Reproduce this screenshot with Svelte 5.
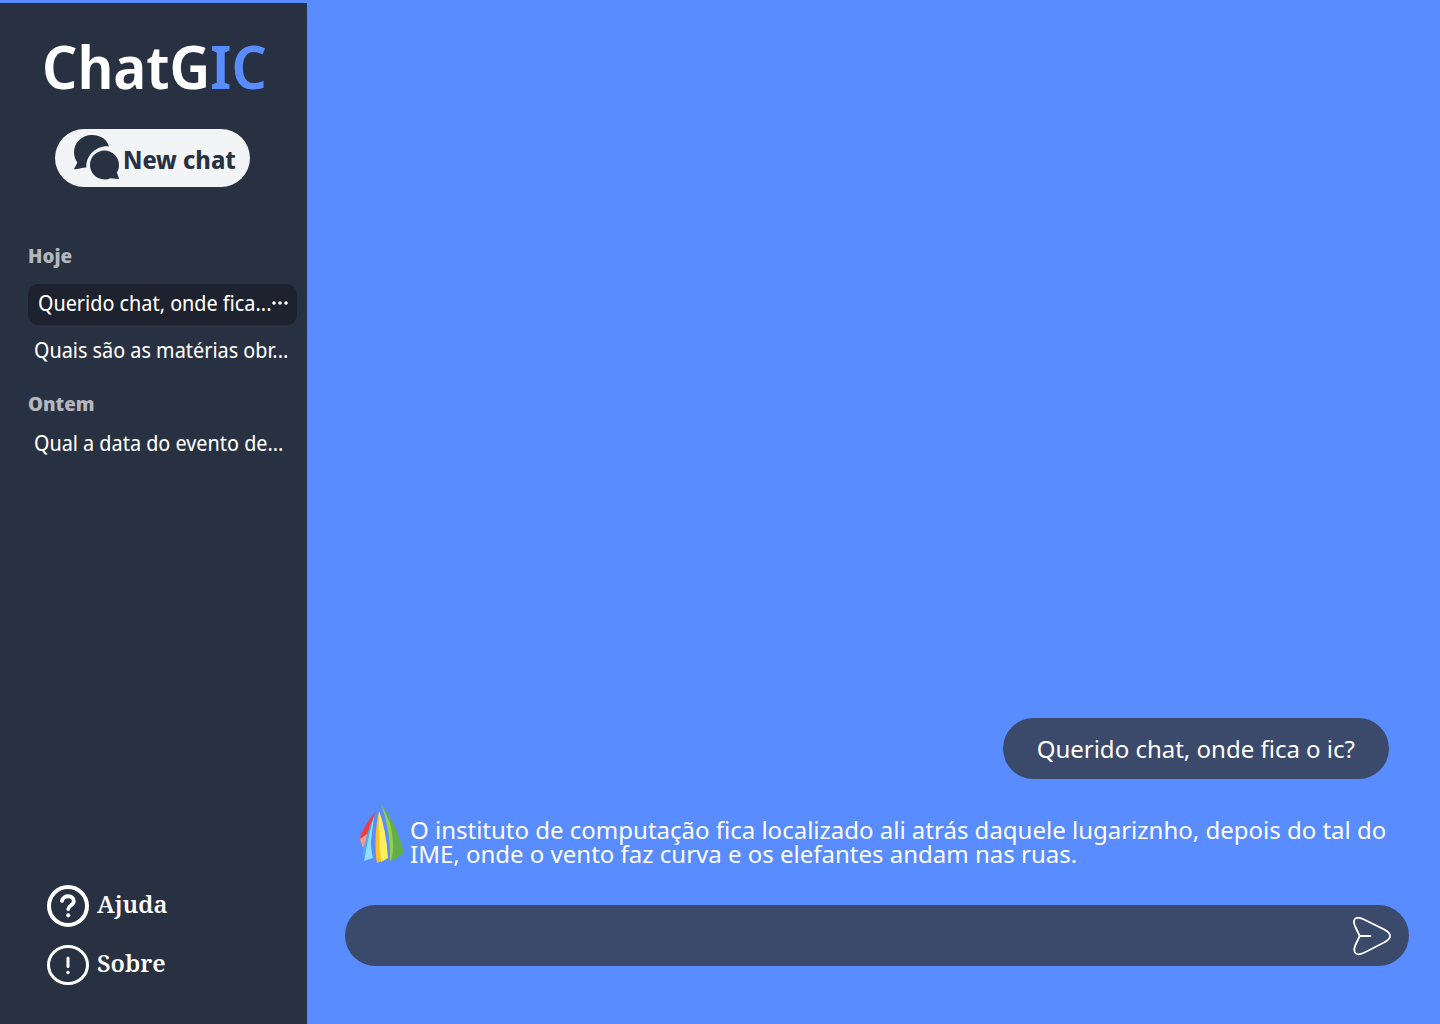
<script>
  const groups = [
    {
      label: 'Hoje',
      chats: [
        { title: 'Querido chat, onde fica...', active: true },
        { title: 'Quais são as matérias obr...', active: false }
      ]
    },
    { label: 'Ontem', chats: [{ title: 'Qual a data do evento de...', active: false }] }
  ];
  let message = $state('');
</script>

<div class="app">
  <aside class="sidebar">
    <h1 class="logo">ChatG<span>IC</span></h1>

    <button class="new-chat" type="button">
      <svg width="46" height="45" viewBox="0 0 46 45" aria-hidden="true">
        <path d="M18 0C27 0 33.500 5 35 11.500C24 10 12 19 12.300 32.500C9.500 32.500 7 33.500 .8 34.200C.2 34.200 0 33.800 .4 33.200L3.400 27.500C1.200 24.500 0 21 0 17.500C0 7.500 8 0 18 0Z" />
        <path d="M30.500 15.600C38.500 15.600 45 22 45 30.200C45 33 44.200 35.500 42.800 37.600L44.800 42.800C45 43.600 44.800 44 44 44L36.500 43.200C34.600 44 32.700 44.400 30.500 44.400C22.500 44.400 16 38 16 30C16 22 22.500 15.600 30.500 15.600Z" />
      </svg>
      <span>New chat</span>
    </button>

    <nav class="history" aria-label="Conversas">
      {#each groups as group}
        <section class="group">
          <h2>{group.label}</h2>
          <ul>
            {#each group.chats as chat}
              <li class:active={chat.active}>
                <a href="#chat">{chat.title}</a>
                {#if chat.active}
                  <button class="more" type="button" aria-label="Mais opções">
                    <svg width="16" height="4" viewBox="0 0 16 4" aria-hidden="true">
                      <circle cx="2" cy="2" r="1.800" /><circle cx="8" cy="2" r="1.800" /><circle cx="14" cy="2" r="1.800" />
                    </svg>
                  </button>
                {/if}
              </li>
            {/each}
          </ul>
        </section>
      {/each}
    </nav>

    <footer class="links">
      <a href="#ajuda">
        <svg width="42" height="42" viewBox="0 0 42 42" fill="none" stroke="#fff" stroke-linecap="round" stroke-linejoin="round" aria-hidden="true">
          <circle cx="21" cy="21" r="19" stroke-width="4" />
          <path d="M15 15.800C16.200 9.500 26.800 9.800 26.800 16.200C26.800 20.300 21.200 20.500 21.200 24" stroke-width="3.800" />
          <circle cx="21.200" cy="30.300" r="2.100" fill="#fff" stroke="none" />
        </svg>
        <span>Ajuda</span>
      </a>
      <a href="#sobre">
        <svg width="42" height="42" viewBox="0 0 42 42" fill="none" stroke="#fff" stroke-linecap="round" aria-hidden="true">
          <ellipse cx="21" cy="21" rx="19.500" ry="18.500" stroke-width="3" />
          <path d="M21 14V22.500" stroke-width="3" />
          <circle cx="21" cy="28.500" r="1.700" fill="#fff" stroke="none" />
        </svg>
        <span>Sobre</span>
      </a>
    </footer>
  </aside>

  <main class="chat">
    <p class="question">Querido chat, onde fica o ic?</p>

    <div class="answer">
      <svg width="46" height="60" viewBox="0 0 46 60" aria-hidden="true">
        <path d="M16 6C9 14 3 24 0 32L1 36L7 29Z" fill="#f43b3b" />
        <path d="M7 29L0 34L3 43L6 37Z" fill="#ff9c8c" />
        <path d="M14 11Q6 30 2 51L6 49Z" fill="#4fa8f0" />
        <path d="M14 11Q9 28 4 56L13 53Q11 46 11 36Z" fill="#8fdcff" />
        <path d="M19 6Q14 28 16 52L17 58L23 55Z" fill="#fbc22f" />
        <path d="M19 6Q18 28 21 57L28 53Q26 24 19 6Z" fill="#ffef58" />
        <path d="M21 -2Q31 28 30 56L36 52L33 25Z" fill="#95cf4d" />
        <path d="M21 -2Q38 21 44 48Q38 53 31 56Q36 41 29 14Z" fill="#62ae48" />
      </svg>
      <p>O instituto de computação fica localizado ali atrás daquele lugariznho, depois do tal do IME, onde o vento faz curva e os elefantes andam nas ruas.</p>
    </div>

    <form class="composer" onsubmit={(e) => e.preventDefault()}>
      <input type="text" aria-label="Mensagem" bind:value={message} />
      <button type="submit" aria-label="Enviar">
        <svg width="40" height="40" viewBox="0 0 40 40" fill="none" stroke="#fff" stroke-width="1.800" stroke-linecap="round" stroke-linejoin="round" aria-hidden="true">
          <path d="M8.700 20L4.400 11C1.500 4.500 3.300 1.300 8 1.800C9.500 2 11 2.500 13 3.500L33 13.400C41 17.500 41 22.500 33 26.500L13 36.800C8.500 39 5 39 3.700 36C3 34 3 32 4.400 29ZM8.700 20H19.500" />
        </svg>
      </button>
    </form>
  </main>
</div>

<style>
  :global(body) {
    margin: 0;
    background: #588cff;
  }
  .app {
    display: flex;
    min-height: 100vh;
    box-sizing: border-box;
    border-top: 3px solid #588cff;
    font-family: 'Noto Sans', sans-serif;
    color: #fff;
  }
  h1, h2, p, ul {
    margin: 0;
    padding: 0;
  }
  a {
    color: inherit;
    text-decoration: none;
  }
  button {
    border: 0;
    padding: 0;
    background: none;
    color: inherit;
    font: inherit;
    cursor: pointer;
  }
  svg {
    display: block;
    flex: none;
    overflow: visible;
  }
  .sidebar {
    display: flex;
    flex-direction: column;
    flex: none;
    width: 307px;
    box-sizing: border-box;
    padding: 22px 10px 38px 28px;
    background: #283142;
    font-family: 'Noto Sans Display', 'Noto Sans', sans-serif;
  }
  .logo {
    margin-left: 14px;
    font-size: 59px;
    font-weight: 600;
    line-height: 82px;
    white-space: nowrap;
  }
  .logo span {
    color: #588cff;
  }
  .new-chat {
    display: flex;
    align-items: center;
    gap: 3px;
    width: 195px;
    height: 58px;
    margin: 22px 0 0 27px;
    padding: 0 0 1px 19px;
    border-radius: 29px;
    background: #f2f4f6;
    color: #283142;
    fill: #283142;
    font-size: 25px;
    font-weight: 700;
    white-space: nowrap;
  }
  .new-chat span {
    padding-top: 3px;
  }
  .history {
    display: flex;
    flex-direction: column;
    gap: 20px;
    margin-top: 55px;
  }
  h2 {
    margin-bottom: 14px;
    color: #b4b7bf;
    font-size: 20px;
    font-weight: 800;
    line-height: 28px;
  }
  ul {
    display: flex;
    flex-direction: column;
    gap: 5px;
    list-style: none;
  }
  li {
    display: flex;
    align-items: center;
    padding: 4px 6px;
    font-size: 21px;
    font-weight: 400;
    line-height: 32px;
    white-space: nowrap;
  }
  li.active {
    padding: 3px 10px 6px;
    border-radius: 10px;
    background: #1d222e;
  }
  .more {
    fill: #fff;
  }
  .group + .group h2 {
    margin-bottom: 5px;
  }
  .links {
    display: flex;
    flex-direction: column;
    gap: 17px;
    margin: auto 0 0 19px;
    font-family: 'Noto Serif', 'Liberation Serif', serif;
    font-size: 24px;
    font-weight: 600;
    line-height: 36px;
  }
  .links a {
    display: flex;
    align-items: center;
    gap: 8px;
  }
  .links span {
    padding-bottom: 4px;
  }
  .chat {
    display: flex;
    flex: 1;
    flex-direction: column;
    justify-content: flex-end;
    min-width: 0;
    padding: 0 31px 58px 38px;
    font-size: 24px;
    font-weight: 400;
  }
  .question {
    align-self: flex-end;
    margin-right: 20px;
    padding: 14px 34px;
    border-radius: 31px;
    background: #3b4a6b;
    line-height: 33px;
  }
  .answer {
    display: flex;
    align-items: flex-end;
    gap: 4px;
    margin: 26px 20px 39px 15px;
    line-height: 24px;
  }
  .answer svg {
    margin-bottom: 1px;
  }
  .composer {
    display: flex;
    align-items: center;
    height: 61px;
    padding: 0 18px 0 30px;
    border-radius: 31px;
    background: #3b4a6b;
  }
  .composer input {
    flex: 1;
    min-width: 0;
    border: 0;
    outline: 0;
    background: none;
    color: inherit;
    font: inherit;
  }
</style>
